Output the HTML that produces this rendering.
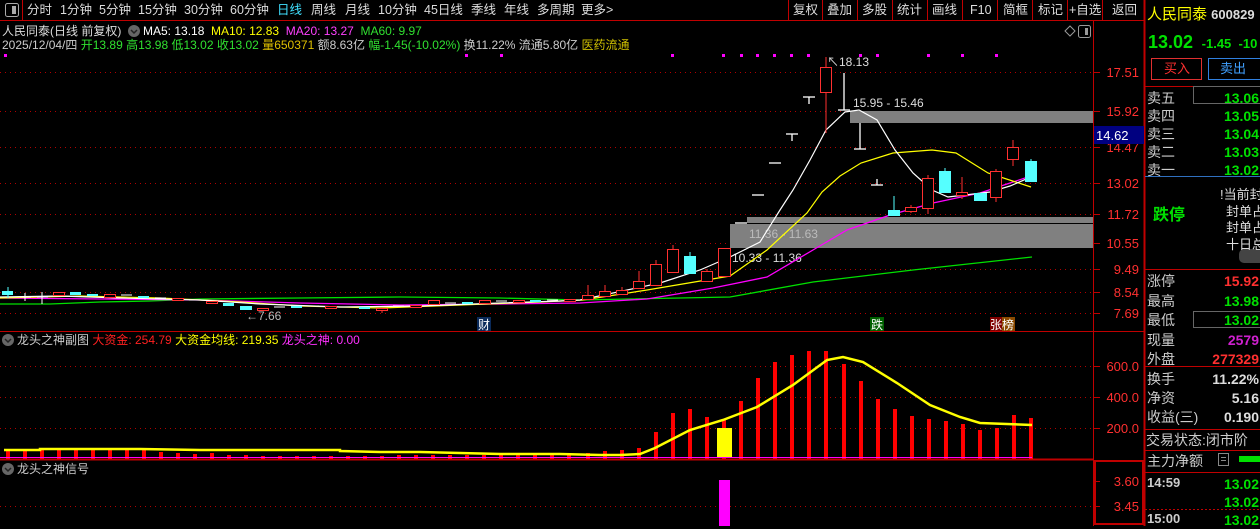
<!DOCTYPE html>
<html><head><meta charset="utf-8"><style>
*{margin:0;padding:0;box-sizing:border-box}
body{width:1260px;height:526px;background:#000;overflow:hidden;position:relative;font-family:"Liberation Sans","Noto Sans CJK SC",sans-serif;font-size:12px;color:#ddd}
.a{position:absolute;white-space:nowrap;line-height:1}
.rp{font-size:14px}
</style></head><body>
<svg width="1260" height="526" style="position:absolute;left:0;top:0" font-family="Liberation Sans, Noto Sans CJK SC, sans-serif">
<!-- frame lines -->
<line x1="0" y1="20.5" x2="1144" y2="20.5" stroke="#c00000"/>
<line x1="22.5" y1="0" x2="22.5" y2="20" stroke="#c00000"/>
<g stroke="#c00000">
<line x1="788.5" y1="0" x2="788.5" y2="20"/><line x1="822.5" y1="0" x2="822.5" y2="20"/><line x1="857.5" y1="0" x2="857.5" y2="20"/><line x1="892.5" y1="0" x2="892.5" y2="20"/><line x1="927.5" y1="0" x2="927.5" y2="20"/><line x1="962.5" y1="0" x2="962.5" y2="20"/><line x1="997.5" y1="0" x2="997.5" y2="20"/><line x1="1032.5" y1="0" x2="1032.5" y2="20"/><line x1="1067.5" y1="0" x2="1067.5" y2="20"/><line x1="1102.5" y1="0" x2="1102.5" y2="20"/>
</g>
<line x1="1093.5" y1="20" x2="1093.5" y2="526" stroke="#c00000"/>
<line x1="1144.5" y1="0" x2="1144.5" y2="526" stroke="#c00000" stroke-width="2"/>
<line x1="0" y1="331.5" x2="1144" y2="331.5" stroke="#c00000"/>
<line x1="0" y1="459.5" x2="1094" y2="459.5" stroke="#c00000" stroke-width="2"/>
<rect x="1095" y="461" width="48" height="63" fill="none" stroke="#c00000" stroke-width="2"/>
<!-- gridlines -->
<g stroke="#b00000" stroke-dasharray="1,4">
<line x1="0" y1="72.5" x2="1093" y2="72.5"/><line x1="0" y1="111.5" x2="1093" y2="111.5"/><line x1="0" y1="147.5" x2="1093" y2="147.5"/><line x1="0" y1="183.5" x2="1093" y2="183.5"/><line x1="0" y1="214.5" x2="1093" y2="214.5"/><line x1="0" y1="243.5" x2="1093" y2="243.5"/><line x1="0" y1="269.5" x2="1093" y2="269.5"/><line x1="0" y1="292.5" x2="1093" y2="292.5"/><line x1="0" y1="313.5" x2="1093" y2="313.5"/>
<line x1="0" y1="366.5" x2="1093" y2="366.5"/><line x1="0" y1="397.5" x2="1093" y2="397.5"/><line x1="0" y1="428.5" x2="1093" y2="428.5"/>
<line x1="0" y1="506.5" x2="1093" y2="506.5"/>
</g>
<!-- axis ticks -->
<g stroke="#c00000">
<line x1="1094" y1="72.5" x2="1100" y2="72.5"/><line x1="1094" y1="111.5" x2="1100" y2="111.5"/><line x1="1094" y1="147.5" x2="1100" y2="147.5"/><line x1="1094" y1="183.5" x2="1100" y2="183.5"/><line x1="1094" y1="214.5" x2="1100" y2="214.5"/><line x1="1094" y1="243.5" x2="1100" y2="243.5"/><line x1="1094" y1="269.5" x2="1100" y2="269.5"/><line x1="1094" y1="292.5" x2="1100" y2="292.5"/><line x1="1094" y1="313.5" x2="1100" y2="313.5"/>
<line x1="1094" y1="366.5" x2="1100" y2="366.5"/><line x1="1094" y1="397.5" x2="1100" y2="397.5"/><line x1="1094" y1="428.5" x2="1100" y2="428.5"/><line x1="1094" y1="481.5" x2="1100" y2="481.5"/><line x1="1094" y1="506.5" x2="1100" y2="506.5"/>
</g>
<g fill="#ff3030" font-size="13" text-anchor="end">
<text x="1139" y="77">17.51</text><text x="1139" y="116">15.92</text><text x="1139" y="152">14.47</text><text x="1139" y="188">13.02</text><text x="1139" y="219">11.72</text><text x="1139" y="248">10.55</text><text x="1139" y="274">9.49</text><text x="1139" y="297">8.54</text><text x="1139" y="318">7.69</text>
<text x="1139" y="371">600.0</text><text x="1139" y="402">400.0</text><text x="1139" y="433">200.0</text>
<text x="1139" y="486">3.60</text><text x="1139" y="511">3.45</text>
</g>
<rect x="1094" y="126" width="50" height="18" fill="#000080"/>
<text x="1096" y="140" fill="#fff" font-size="13">14.62</text>
<!-- magenta dots -->
<g fill="#ff00ff">
<rect x="4" y="54" width="3" height="3"/><rect x="465" y="54" width="3" height="3"/><rect x="500" y="54" width="3" height="3"/><rect x="671" y="54" width="3" height="3"/><rect x="722" y="54" width="3" height="3"/><rect x="740" y="54" width="3" height="3"/><rect x="756" y="54" width="3" height="3"/><rect x="773" y="54" width="3" height="3"/><rect x="790" y="54" width="3" height="3"/><rect x="807" y="54" width="3" height="3"/><rect x="859" y="54" width="3" height="3"/><rect x="876" y="54" width="3" height="3"/><rect x="927" y="54" width="3" height="3"/><rect x="961" y="54" width="3" height="3"/><rect x="995" y="54" width="3" height="3"/>
</g>
<!-- gray zones -->
<rect x="850" y="111" width="243" height="12" fill="#808080"/>
<rect x="747" y="217" width="346" height="6" fill="#808080"/>
<rect x="730" y="224" width="363" height="24" fill="#808080"/>
<text x="853" y="107" fill="#ddd" font-size="12">15.95 - 15.46</text>
<text x="749" y="238" fill="#bbb" font-size="12">11.36 - 11.63</text>
<text x="732" y="262" fill="#ddd" font-size="12">10.33 - 11.36</text>
<text x="827" y="66" fill="#ddd" font-size="12">↖18.13</text>
<text x="246" y="320" fill="#bbb" font-size="12">←7.66</text>
<!-- MA lines -->
<polyline fill="none" stroke="#00e000" stroke-width="1.3" points="0,304 50,304 100,302 150,301 200,299 300,298 400,297 500,298 580,300 730,297 813,282 913,270 1032,257"/>
<polyline fill="none" stroke="#ff00ff" stroke-width="1.3" points="0,298 100,299 200,300 300,303 400,305 500,304 580,303 647,299 713,288 767,277 813,250 847,230 890,215 933,203 980,193 1031,176"/>
<polyline fill="none" stroke="#ffff00" stroke-width="1.2" points="0,298 80,296 160,298 240,302 300,306 380,308 460,305 540,302 583,300 647,290 730,276 767,250 807,213 822,192 840,176 861,163 893,153 932,150 956,153 988,173 1031,187"/>
<polyline fill="none" stroke="#ffffff" stroke-width="1.2" points="0,297 60,296 120,298 200,300 260,304 340,307 420,306 500,303 560,301 580,300 660,283 700,270 730,257 760,242 780,210 793,190 810,160 826,130 845,112 859,110 877,120 895,150 913,173 932,190 948,197 965,195 990,192 1010,186 1031,177"/>
<!-- left candles -->
<g stroke-width="1">
<rect x="2" y="291" width="11" height="4" fill="#55ffff"/><line x1="8" y1="287" x2="8" y2="298" stroke="#55ffff"/>
<line x1="25" y1="293" x2="25" y2="301" stroke="#fff"/><line x1="20" y1="297" x2="31" y2="297" stroke="#fff"/>
<line x1="42" y1="292" x2="42" y2="304" stroke="#fff"/><line x1="37" y1="297" x2="48" y2="297" stroke="#fff"/>
<rect x="53.5" y="292.5" width="11" height="3" fill="#000" stroke="#ff3030"/>
<rect x="70" y="292" width="11" height="3" fill="#55ffff"/>
<rect x="87" y="294" width="11" height="2" fill="#55ffff"/>
<rect x="104.5" y="294.5" width="11" height="3" fill="#000" stroke="#ff3030"/>
<line x1="121" y1="295" x2="132" y2="295" stroke="#fff"/>
<rect x="138" y="296" width="11" height="2" fill="#55ffff"/>
<line x1="155" y1="298" x2="166" y2="298" stroke="#fff"/>
<rect x="172.5" y="298.5" width="11" height="2" fill="#000" stroke="#ff3030"/>
<line x1="189" y1="300" x2="200" y2="300" stroke="#fff"/>
<rect x="206.5" y="301.5" width="11" height="2" fill="#000" stroke="#ff3030"/>
<rect x="223" y="303" width="11" height="3" fill="#55ffff"/>
<rect x="240" y="306" width="12" height="4" fill="#55ffff"/>
<rect x="257.5" y="308.5" width="11" height="2" fill="#000" stroke="#ff3030"/>
<line x1="274" y1="307" x2="285" y2="307" stroke="#fff"/>
<rect x="291" y="306" width="11" height="2" fill="#55ffff"/>
<line x1="308" y1="306" x2="319" y2="306" stroke="#fff"/>
<rect x="325.5" y="306.5" width="11" height="2" fill="#000" stroke="#ff3030"/>
<line x1="342" y1="307" x2="353" y2="307" stroke="#fff"/>
<rect x="359" y="307" width="11" height="2" fill="#55ffff"/>
<rect x="376.5" y="308.5" width="11" height="2" fill="#000" stroke="#ff3030"/><line x1="382" y1="310" x2="382" y2="313" stroke="#ff3030"/>
<line x1="393" y1="306" x2="404" y2="306" stroke="#fff"/>
<rect x="410.5" y="305.5" width="11" height="2" fill="#000" stroke="#ff3030"/>
<rect x="428.5" y="300.5" width="11" height="4" fill="#000" stroke="#ff3030"/>
<line x1="445" y1="303" x2="456" y2="303" stroke="#fff"/>
<rect x="462" y="302" width="11" height="2" fill="#55ffff"/>
<rect x="479.5" y="300.5" width="11" height="3" fill="#000" stroke="#ff3030"/>
<line x1="496" y1="301" x2="507" y2="301" stroke="#fff"/>
<rect x="513.5" y="300.5" width="11" height="2" fill="#000" stroke="#ff3030"/>
<rect x="530" y="300" width="11" height="2" fill="#55ffff"/>
<line x1="547" y1="300" x2="558" y2="300" stroke="#fff"/>
<rect x="564.5" y="299.5" width="11" height="2" fill="#000" stroke="#ff3030"/>
</g>
<!-- right candles -->
<g fill="#000" stroke="#ff3030">
<line x1="588" y1="285" x2="588" y2="295"/><rect x="582.5" y="295.5" width="11" height="4"/>
<line x1="605" y1="285" x2="605" y2="291"/><rect x="599.5" y="291.5" width="11" height="5"/>
<line x1="622" y1="287" x2="622" y2="290"/><rect x="616.5" y="290.5" width="11" height="4"/>
<line x1="639" y1="271" x2="639" y2="281"/><rect x="633.5" y="281.5" width="11" height="7"/>
<line x1="656" y1="260" x2="656" y2="264"/><rect x="650.5" y="264.5" width="11" height="21"/>
<line x1="673" y1="245" x2="673" y2="249"/><rect x="667.5" y="249.5" width="11" height="23"/>
<line x1="707" y1="269" x2="707" y2="271"/><rect x="701.5" y="271.5" width="11" height="10"/>
<rect x="718.5" y="248.5" width="12" height="28"/>
<line x1="826" y1="57" x2="826" y2="133"/><rect x="820.5" y="67.5" width="11" height="25"/>
<line x1="911" y1="205" x2="911" y2="213"/><rect x="905.5" y="207.5" width="11" height="4"/>
<line x1="928" y1="175" x2="928" y2="214"/><rect x="922.5" y="178.5" width="11" height="30"/>
<line x1="962" y1="177" x2="962" y2="199"/><rect x="956.5" y="192.5" width="11" height="3"/>
<line x1="996" y1="169" x2="996" y2="202"/><rect x="990.5" y="171.5" width="11" height="26"/>
<line x1="1013" y1="140" x2="1013" y2="166"/><rect x="1007.5" y="147.5" width="11" height="12"/>
</g>
<g fill="#55ffff" stroke="#55ffff">
<line x1="690" y1="252" x2="690" y2="256"/><rect x="684" y="256" width="12" height="18" stroke="none"/>
<line x1="894" y1="196" x2="894" y2="211"/><rect x="888" y="210" width="12" height="6" stroke="none"/>
<line x1="945" y1="168" x2="945" y2="172"/><rect x="939" y="171" width="12" height="22" stroke="none"/>
<rect x="974" y="193" width="13" height="8" stroke="none"/>
<line x1="1031" y1="159" x2="1031" y2="161"/><rect x="1025" y="161" width="12" height="21" stroke="none"/>
</g>
<g stroke="#fff" stroke-width="1.3">
<line x1="735" y1="223" x2="747" y2="223"/>
<line x1="752" y1="195" x2="764" y2="195"/>
<line x1="769" y1="163" x2="781" y2="163"/>
<line x1="786" y1="134" x2="798" y2="134"/><line x1="792" y1="134" x2="792" y2="141"/>
<line x1="803" y1="97" x2="815" y2="97"/><line x1="809" y1="97" x2="809" y2="104"/>
<line x1="844" y1="73" x2="844" y2="110"/><line x1="838" y1="110" x2="850" y2="110"/>
<line x1="860" y1="123" x2="860" y2="149"/><line x1="854" y1="149" x2="866" y2="149"/>
<line x1="877" y1="179" x2="877" y2="185"/><line x1="871" y1="185" x2="883" y2="185"/>
</g>
<!-- markers -->
<rect x="477" y="317" width="14" height="14" fill="#0a2a5a"/><text x="478" y="329" fill="#fff" font-size="12">财</text>
<rect x="870" y="317" width="14" height="14" fill="#006000"/><text x="871" y="329" fill="#fff" font-size="12">跌</text>
<rect x="990" y="317" width="12" height="14" fill="#800000"/><rect x="1002" y="317" width="13" height="14" fill="#8a4a00"/><text x="990" y="329" fill="#fff" font-size="12">张榜</text>
<!-- sub chart bars -->
<g fill="#ff0000">
<rect x="6" y="449" width="4" height="10"/><rect x="23" y="449" width="4" height="10"/><rect x="40" y="450" width="4" height="9"/><rect x="57" y="450" width="4" height="9"/><rect x="74" y="450" width="4" height="9"/><rect x="91" y="449" width="4" height="10"/><rect x="108" y="450" width="4" height="9"/><rect x="125" y="450" width="4" height="9"/><rect x="142" y="450" width="4" height="9"/><rect x="159" y="452" width="4" height="7"/><rect x="176" y="453" width="4" height="6"/><rect x="193" y="454" width="4" height="5"/><rect x="210" y="453" width="4" height="6"/><rect x="227" y="455" width="4" height="4"/><rect x="244" y="455" width="4" height="4"/><rect x="261" y="456" width="4" height="3"/><rect x="278" y="456" width="4" height="3"/><rect x="295" y="456" width="4" height="3"/><rect x="312" y="456" width="4" height="3"/><rect x="329" y="456" width="4" height="3"/><rect x="346" y="456" width="4" height="3"/><rect x="363" y="456" width="4" height="3"/><rect x="380" y="456" width="4" height="3"/><rect x="397" y="455" width="4" height="4"/><rect x="414" y="455" width="4" height="4"/><rect x="431" y="455" width="4" height="4"/><rect x="448" y="455" width="4" height="4"/><rect x="465" y="455" width="4" height="4"/><rect x="482" y="455" width="4" height="4"/><rect x="499" y="455" width="4" height="4"/><rect x="516" y="455" width="4" height="4"/><rect x="533" y="455" width="4" height="4"/><rect x="550" y="455" width="4" height="4"/><rect x="567" y="455" width="4" height="4"/>
<rect x="586" y="453" width="4" height="6"/><rect x="603" y="451" width="4" height="8"/><rect x="620" y="450" width="4" height="9"/><rect x="637" y="448" width="4" height="11"/><rect x="654" y="432" width="4" height="27"/><rect x="671" y="413" width="4" height="46"/><rect x="688" y="409" width="4" height="50"/><rect x="705" y="417" width="4" height="42"/><rect x="722" y="420" width="4" height="39"/><rect x="739" y="401" width="4" height="58"/><rect x="756" y="378" width="4" height="81"/><rect x="773" y="362" width="4" height="97"/><rect x="790" y="355" width="4" height="104"/><rect x="807" y="351" width="4" height="108"/><rect x="824" y="351" width="4" height="108"/><rect x="842" y="364" width="4" height="95"/><rect x="859" y="381" width="4" height="78"/><rect x="876" y="399" width="4" height="60"/><rect x="893" y="409" width="4" height="50"/><rect x="910" y="416" width="4" height="43"/><rect x="927" y="419" width="4" height="40"/><rect x="944" y="421" width="4" height="38"/><rect x="961" y="424" width="4" height="35"/><rect x="978" y="430" width="4" height="29"/><rect x="995" y="428" width="4" height="31"/><rect x="1012" y="415" width="4" height="44"/><rect x="1029" y="418" width="4" height="41"/>
</g>
<rect x="717" y="428" width="15" height="30" fill="#ffff00"/>
<line x1="0" y1="457.5" x2="1032" y2="457.5" stroke="#ff00ff"/>
<polyline fill="none" stroke="#ffff00" stroke-width="2.5" points="4,450 40,450 40,449 140,449 200,450 260,450 300,450 340,450 340,451 380,452 420,452 460,453 500,454 560,454 600,455 620,455 640,454 655,448 690,430 723,420 757,407 793,385 827,360 843,357 863,362 897,383 930,405 960,417 980,423 1032,425"/>
<rect x="719" y="480" width="11" height="46" fill="#ff00ff"/>
<!-- icons -->
<rect x="5.5" y="3.5" width="13" height="13" rx="2" fill="none" stroke="#aaa"/><rect x="12" y="6" width="4" height="8" fill="#aaa"/>
<circle cx="134" cy="31" r="6" fill="#666"/><path d="M131 30 l3 3 l3 -3" stroke="#222" fill="none" stroke-width="1.5"/>
<circle cx="8" cy="340" r="6" fill="#666"/><path d="M5 339 l3 3 l3 -3" stroke="#222" fill="none" stroke-width="1.5"/>
<circle cx="8" cy="469" r="6" fill="#666"/><path d="M5 468 l3 3 l3 -3" stroke="#222" fill="none" stroke-width="1.5"/>
<path d="M1065 31 l5 -5 l5 5 l-5 5z" fill="none" stroke="#999"/>
<rect x="1078.5" y="25.5" width="12" height="12" rx="2" fill="none" stroke="#999"/><rect x="1085" y="28" width="3" height="7" fill="#999"/>
<!-- right panel lines -->
<g stroke="#c00000"><line x1="1145" y1="86.5" x2="1260" y2="86.5"/><line x1="1145" y1="269.5" x2="1260" y2="269.5"/><line x1="1145" y1="366.5" x2="1260" y2="366.5"/><line x1="1145" y1="429.5" x2="1260" y2="429.5"/><line x1="1145" y1="450.5" x2="1260" y2="450.5"/><line x1="1145" y1="472.5" x2="1260" y2="472.5"/></g>
<line x1="1145" y1="176.5" x2="1260" y2="176.5" stroke="#3070c0"/>
<line x1="1145" y1="509.5" x2="1260" y2="509.5" stroke="#c00000" stroke-dasharray="2,2"/>
<rect x="1193.5" y="86.5" width="70" height="17" fill="none" stroke="#666"/>
<rect x="1193.5" y="311.5" width="70" height="16" fill="none" stroke="#666"/>
<rect x="1151.5" y="58.5" width="50" height="21" fill="none" stroke="#e03030"/>
<rect x="1208.5" y="58.5" width="55" height="21" fill="none" stroke="#3080e0"/>
<rect x="1239" y="456" width="21" height="6" fill="#00e000"/>
<rect x="1239" y="249" width="30" height="14" rx="5" fill="#444"/>
<rect x="1218.5" y="453.5" width="10" height="12" fill="none" stroke="#888"/><line x1="1221" y1="457.5" x2="1226" y2="457.5" stroke="#888"/><line x1="1221" y1="460.5" x2="1226" y2="460.5" stroke="#888"/>
</svg>
<!-- top bar -->
<div class="a" style="top:4px;left:27px;font-size:12.5px;color:#ddd;word-spacing:0">
<span style="position:absolute;left:0">分时</span><span style="position:absolute;left:33px">1分钟</span><span style="position:absolute;left:72px">5分钟</span><span style="position:absolute;left:111px">15分钟</span><span style="position:absolute;left:157px">30分钟</span><span style="position:absolute;left:203px">60分钟</span><span style="position:absolute;left:250px;color:#40e0ff">日线</span><span style="position:absolute;left:284px">周线</span><span style="position:absolute;left:318px">月线</span><span style="position:absolute;left:351px">10分钟</span><span style="position:absolute;left:397px">45日线</span><span style="position:absolute;left:444px">季线</span><span style="position:absolute;left:477px">年线</span><span style="position:absolute;left:510px">多周期</span><span style="position:absolute;left:554px">更多&gt;</span>
</div>
<div class="a" style="top:4px;left:0;font-size:12.5px;color:#ddd">
<span style="position:absolute;left:793px">复权</span><span style="position:absolute;left:827px">叠加</span><span style="position:absolute;left:862px">多股</span><span style="position:absolute;left:897px">统计</span><span style="position:absolute;left:932px">画线</span><span style="position:absolute;left:970px">F10</span><span style="position:absolute;left:1003px">简框</span><span style="position:absolute;left:1038px">标记</span><span style="position:absolute;left:1069px">+自选</span><span style="position:absolute;left:1112px">返回</span>
</div>
<div class="a" style="top:25px;left:2px;font-size:12px;color:#ddd">人民同泰(日线 前复权)</div>
<div class="a" style="top:25px;left:143px;font-size:12px"><span style="color:#fff">MA5: 13.18</span>&nbsp; <span style="color:#ffff00">MA10: 12.83</span>&nbsp; <span style="color:#ff40ff">MA20: 13.27</span>&nbsp; <span style="color:#30e030">MA60: 9.97</span></div>
<div class="a" style="top:39px;left:2px;font-size:12px;color:#ccc">2025/12/04/四 <span style="color:#30e030">开13.89 高13.98 低13.02 收13.02</span> <span style="color:#e0c000">量650371</span> 额8.63亿 <span style="color:#30e030">幅-1.45(-10.02%)</span> 换11.22% 流通5.80亿 <span style="color:#d0c000">医药流通</span></div>
<div class="a" style="top:334px;left:17px;font-size:12px;color:#ccc">龙头之神副图 <span style="color:#ff2020">大资金: 254.79</span> <span style="color:#ffff00">大资金均线: 219.35</span> <span style="color:#ff30ff">龙头之神: 0.00</span></div>
<div class="a" style="top:463px;left:17px;font-size:12px;color:#ccc">龙头之神信号</div>
<!-- right panel -->
<div class="a" style="top:7px;left:1147px;font-size:15px;color:#ffff00">人民同泰 <span style="color:#ddd;font-size:13px;font-weight:bold">600829</span></div>
<div class="a" style="top:33px;left:1148px;font-size:18px;color:#00e000;font-weight:bold">13.02 <span style="font-size:13px">&nbsp;-1.45 &nbsp;-10</span></div>
<div class="a" style="top:62px;left:1164px;font-size:13px;color:#ff3030">买入</div>
<div class="a" style="top:62px;left:1220px;font-size:13px;color:#40a0ff">卖出</div>
<div class="a rp" style="top:89px;left:1147px;color:#ccc;line-height:18px">卖五<br>卖四<br>卖三<br>卖二<br>卖一</div>
<div class="a rp" style="top:89px;right:1px;color:#00e000;line-height:18px;font-weight:bold;text-align:right">13.06<br>13.05<br>13.04<br>13.03<br>13.02</div>
<div class="a" style="top:187px;left:1226px;font-size:13px;color:#ddd;line-height:16.5px"><span style="margin-left:-6px">!</span>当前封<br>封单占<br>封单占<br>十日总</div>
<div class="a" style="top:208px;left:1153px;font-size:16px;color:#00e000;font-weight:bold">跌停</div>
<div class="a rp" style="top:272px;left:1147px;color:#ccc;line-height:19.5px">涨停<br>最高<br>最低<br>现量<br>外盘</div>
<div class="a rp" style="top:272px;right:1px;line-height:19.5px;font-weight:bold;text-align:right"><span style="color:#ff3030">15.92</span><br><span style="color:#00e000">13.98</span><br><span style="color:#00e000">13.02</span><br><span style="color:#d020d0">2579</span><br><span style="color:#ff3030">277329</span></div>
<div class="a rp" style="top:370px;left:1147px;color:#ccc;line-height:19px">换手<br>净资<br>收益(三)</div>
<div class="a rp" style="top:370px;right:1px;color:#ddd;line-height:19px;font-weight:bold;text-align:right">11.22%<br>5.16<br>0.190</div>
<div class="a rp" style="top:433px;left:1146px;color:#ccc">交易状态:闭市阶</div>
<div class="a rp" style="top:454px;left:1147px;color:#ccc">主力净额</div>
<div class="a" style="top:476px;left:1147px;font-size:13px;color:#ccc;font-weight:bold">14:59</div>
<div class="a" style="top:512px;left:1147px;font-size:13px;color:#ccc;font-weight:bold">15:00</div>
<div class="a rp" style="top:475px;right:1px;color:#00e000;font-weight:bold;line-height:18px;text-align:right">13.02<br>13.02<br>13.02</div>
</body></html>
